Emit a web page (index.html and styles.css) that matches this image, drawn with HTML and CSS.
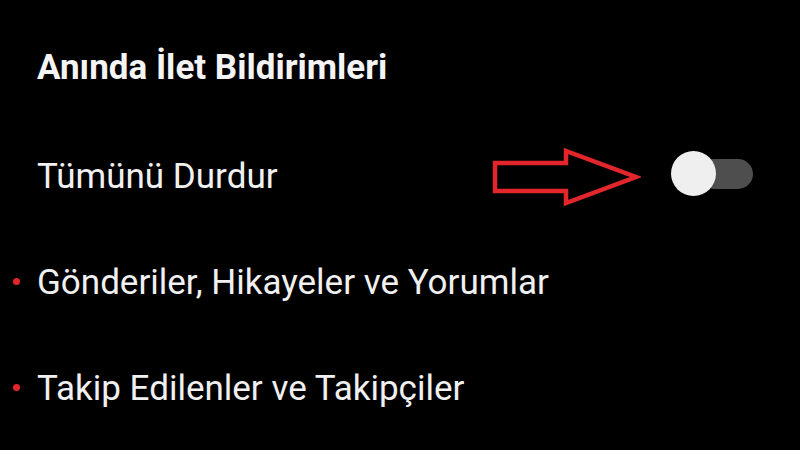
FILE: index.html
```html
<!DOCTYPE html>
<html lang="tr">
<head>
    <meta charset="UTF-8">
    <meta name="viewport" content="width=device-width, initial-scale=1.0">
    <title>Bildirimler</title>
    <link rel="stylesheet" href="styles.css">
</head>
<body>
    <div class="settings">
        <h1 class="section-title">Anında İlet Bildirimleri</h1>

        <!--stop all-->
        <div class="row first">
            <span class="label">Tümünü Durdur</span>
            <svg class="arrow" width="150" height="58" viewBox="0 0 150 58">
                <path d="M4 15 H75 V3 L145 29 L75 55 V43 H4 Z" fill="none" stroke="#e3262b" stroke-width="4.5" stroke-linejoin="miter"/>
            </svg>
            <div class="switch">
                <div class="track"></div>
                <div class="knob"></div>
            </div>
        </div>

        <!--categories-->
        <div class="row item">
            <span class="dot"></span>
            <span class="label">Gönderiler, Hikayeler ve Yorumlar</span>
        </div>
        <div class="row item">
            <span class="dot"></span>
            <span class="label">Takip Edilenler ve Takipçiler</span>
        </div>
    </div>
</body>
</html>
```

FILE: styles.css
```css
body {
    margin: 0;
    background-color: #000;
    font-family: Roboto, "Noto Sans", Arial, sans-serif;
    color: #f0f0f0;
    width: 800px;
    height: 450px;
    overflow: hidden;
}
.settings {
    padding: 48px 0 0 37px;
}
.section-title {
    margin: 0;
    font-size: 35px;
    font-weight: 700;
    line-height: 40px;
    color: #f4f4f4;
}
.row {
    display: flex;
    align-items: center;
    height: 106px;
    position: relative;
}
.row.first {
    margin-top: 36px;
}
.label {
    font-size: 35px;
    line-height: 40px;
}
.arrow {
    margin-left: auto;
    margin-right: 30px;
}
.switch {
    position: relative;
    width: 84px;
    height: 46px;
    margin-right: 45px;
    margin-bottom: 6px;
}
.track {
    position: absolute;
    left: 28px;
    top: 8px;
    width: 54px;
    height: 30px;
    border-radius: 15px;
    background-color: #4e4e4e;
}
.knob {
    position: absolute;
    left: 0;
    top: 0;
    width: 45px;
    height: 45px;
    border-radius: 50%;
    background-color: #efefef;
}
.dot {
    position: absolute;
    left: -24px;
    top: 48px;
    width: 7px;
    height: 7px;
    border-radius: 50%;
    background-color: #e3262b;
}
```
